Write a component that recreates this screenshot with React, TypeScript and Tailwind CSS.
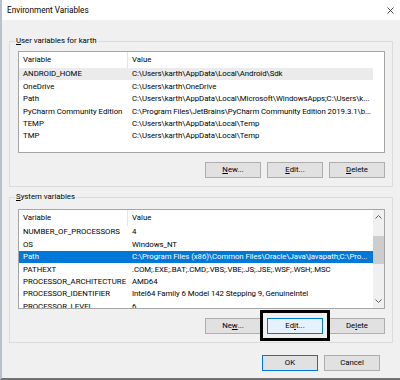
import React from "react";

type Row = { name: string; value: string; sel?: "blue" | "gray" };

const userRows: Row[] = [
  { name: "ANDROID_HOME", value: "C:\\Users\\karth\\AppData\\Local\\Android\\Sdk", sel: "gray" },
  { name: "OneDrive", value: "C:\\Users\\karth\\OneDrive" },
  { name: "Path", value: "C:\\Users\\karth\\AppData\\Local\\Microsoft\\WindowsApps;C:\\Users\\k..." },
  { name: "PyCharm Community Edition", value: "C:\\Program Files\\JetBrains\\PyCharm Community Edition 2019.3.1\\b..." },
  { name: "TEMP", value: "C:\\Users\\karth\\AppData\\Local\\Temp" },
  { name: "TMP", value: "C:\\Users\\karth\\AppData\\Local\\Temp" },
];

const sysRows: Row[] = [
  { name: "NUMBER_OF_PROCESSORS", value: "4" },
  { name: "OS", value: "Windows_NT" },
  { name: "Path", value: "C:\\Program Files (x86)\\Common Files\\Oracle\\Java\\javapath;C:\\Pro...", sel: "blue" },
  { name: "PATHEXT", value: ".COM;.EXE;.BAT;.CMD;.VBS;.VBE;.JS;.JSE;.WSF;.WSH;.MSC" },
  { name: "PROCESSOR_ARCHITECTURE", value: "AMD64" },
  { name: "PROCESSOR_IDENTIFIER", value: "Intel64 Family 6 Model 142 Stepping 9, GenuineIntel" },
  { name: "PROCESSOR_LEVEL", value: "6" },
];

function ListRow({ r }: { r: Row }) {
  const cls =
    r.sel === "blue"
      ? "bg-[#0078d7] text-white"
      : r.sel === "gray"
      ? "bg-[#ebebeb] text-black"
      : "text-black";
  return (
    <div className={`flex h-[12.4px] shrink-0 items-center whitespace-nowrap ${cls}`}>
      <div className="w-[109px] shrink-0 overflow-hidden pl-[4px]">{r.name}</div>
      <div className="min-w-0 flex-1 overflow-hidden pl-[4px] tracking-[-0.06px]">{r.value}</div>
    </div>
  );
}

function Header({ h }: { h: string }) {
  return (
    <div className={`flex ${h} shrink-0 items-center text-black`}>
      <div className="flex h-full w-[109px] shrink-0 items-center border-r border-[#e5e5e5] pl-[4px]">Variable</div>
      <div className="pl-[4px]">Value</div>
    </div>
  );
}

function Btn({
  children,
  variant = "normal",
}: {
  children: React.ReactNode;
  variant?: "normal" | "focus" | "default";
}) {
  const cls =
    variant === "focus"
      ? "bg-[#e5f1fb] border-[#0078d7]"
      : variant === "default"
      ? "bg-[#e1e1e1] border-[#0078d7]"
      : "bg-[#e1e1e1] border-[#adadad]";
  return (
    <div className={`flex h-[16px] w-[56px] items-center justify-center border text-black ${cls}`}>
      {children}
    </div>
  );
}

function Group({ legend, children, cls }: { legend: React.ReactNode; children: React.ReactNode; cls: string }) {
  return (
    <div className={`relative ml-[7px] mr-[7px] border border-[#dcdcdc] ${cls}`}>
      <span className="absolute left-[5px] top-[-7px] bg-[#f0f0f0] px-[1px] leading-[12px] text-black">{legend}</span>
      {children}
    </div>
  );
}

function Chevron({ up }: { up?: boolean }) {
  return (
    <svg width="7" height="4" viewBox="0 0 7 4">
      <path
        d={up ? "M0.5 3.5 L3.5 0.5 L6.5 3.5" : "M0.5 0.5 L3.5 3.5 L6.5 0.5"}
        fill="none"
        stroke="#606060"
        strokeWidth="1"
      />
    </svg>
  );
}

export default function App() {
  return (
    <div className="flex h-[380px] w-[400px] flex-col overflow-hidden border-b-2 border-l-2 border-b-[#707070] border-l-[#b9c0cc] bg-[#f0f0f0] font-['Roboto',sans-serif] text-[7.8px]">
      {/* title bar */}
      <div className="flex h-[20px] shrink-0 items-center justify-between bg-white pl-[5px] pr-[6px]">
        <span className="text-[8.2px] text-black">Environment Variables</span>
        <svg width="7" height="7" viewBox="0 0 7 7">
          <path d="M0.5 0.5 L6.5 6.5 M6.5 0.5 L0.5 6.5" stroke="#333" strokeWidth="0.9" />
        </svg>
      </div>

      {/* user variables */}
      <Group
        cls="mt-[21px] h-[146px] pl-[8px] pr-[7px] pt-[9px]"
        legend={
          <>
            <u className="underline-offset-1">U</u>ser variables for karth
          </>
        }
      >
        <div className="flex h-[102px] flex-col border border-[#a5a5a5] bg-white">
          <div className="flex w-[354px] flex-col overflow-hidden">
            <Header h="h-[16px]" />
            {userRows.map((r) => (
              <ListRow key={r.name} r={r} />
            ))}
          </div>
        </div>
        <div className="mt-[9px] flex justify-end gap-[6px]">
          <Btn>
            <u>N</u>ew...
          </Btn>
          <Btn>
            <u>E</u>dit...
          </Btn>
          <Btn>
            <u>D</u>elete
          </Btn>
        </div>
      </Group>

      {/* system variables */}
      <Group
        cls="mt-[10px] h-[146px] pl-[8px] pr-[7px] pt-[11px]"
        legend={
          <>
            <u className="underline-offset-1">S</u>ystem variables
          </>
        }
      >
        <div className="flex h-[100px] border border-[#a5a5a5] bg-white">
          <div className="flex min-w-0 flex-1 flex-col overflow-hidden">
            <Header h="h-[16px]" />
            {sysRows.map((r) => (
              <ListRow key={r.name} r={r} />
            ))}
          </div>
          <div className="flex w-[11px] shrink-0 flex-col items-center bg-[#f0f0f0]">
            <div className="flex h-[14px] items-center justify-center">
              <Chevron up />
            </div>
            <div className="mt-[12px] h-[28px] w-[11px] bg-[#cdcdcd]" />
            <div className="flex-1" />
            <div className="flex h-[14px] items-center justify-center">
              <Chevron />
            </div>
          </div>
        </div>
        <div className="mt-[9px] flex justify-end gap-[6px]">
          <Btn>
            Ne<u>w</u>...
          </Btn>
          <div className="relative">
            <Btn variant="focus">
              Ed<u>i</u>t...
            </Btn>
            <div className="pointer-events-none absolute bottom-[-7px] left-[-7px] right-[-7px] top-[-8px] border-[3px] border-black" />
          </div>
          <Btn>
            De<u>l</u>ete
          </Btn>
        </div>
      </Group>

      {/* bottom buttons */}
      <div className="mt-[12px] flex justify-end gap-[6px] pr-[20px]">
        <Btn variant="default">OK</Btn>
        <Btn>Cancel</Btn>
      </div>
    </div>
  );
}
